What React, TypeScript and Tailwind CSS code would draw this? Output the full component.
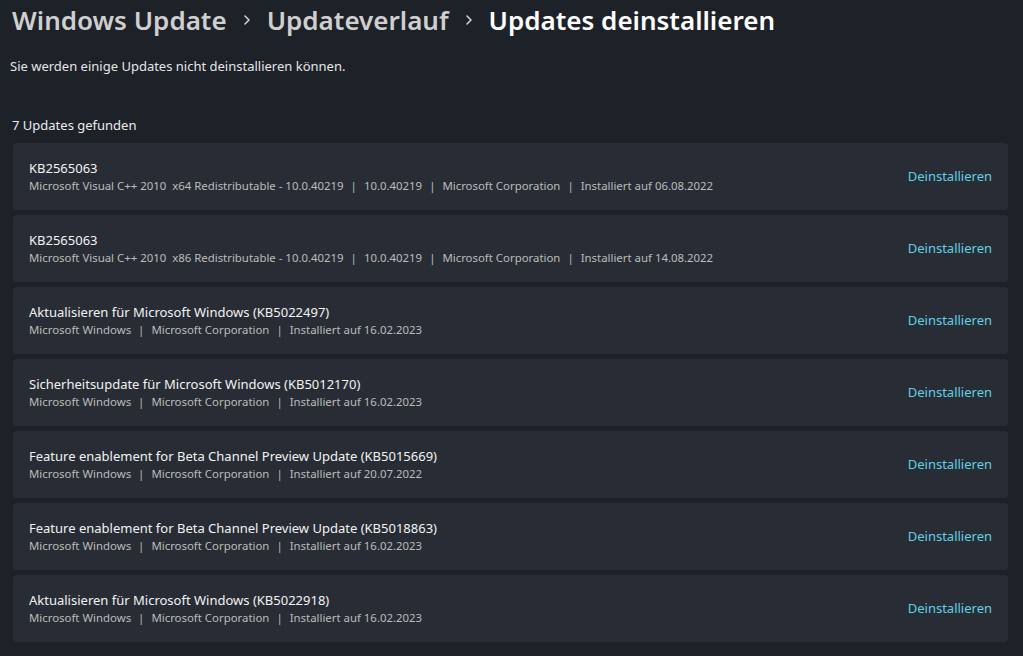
const updates = [
  {
    title: 'KB2565063',
    meta: ['Microsoft Visual C++ 2010  x64 Redistributable - 10.0.40219', '10.0.40219', 'Microsoft Corporation', 'Installiert auf 06.08.2022'],
  },
  {
    title: 'KB2565063',
    meta: ['Microsoft Visual C++ 2010  x86 Redistributable - 10.0.40219', '10.0.40219', 'Microsoft Corporation', 'Installiert auf 14.08.2022'],
  },
  {
    title: 'Aktualisieren für Microsoft Windows (KB5022497)',
    meta: ['Microsoft Windows', 'Microsoft Corporation', 'Installiert auf 16.02.2023'],
  },
  {
    title: 'Sicherheitsupdate für Microsoft Windows (KB5012170)',
    meta: ['Microsoft Windows', 'Microsoft Corporation', 'Installiert auf 16.02.2023'],
  },
  {
    title: 'Feature enablement for Beta Channel Preview Update (KB5015669)',
    meta: ['Microsoft Windows', 'Microsoft Corporation', 'Installiert auf 20.07.2022'],
  },
  {
    title: 'Feature enablement for Beta Channel Preview Update (KB5018863)',
    meta: ['Microsoft Windows', 'Microsoft Corporation', 'Installiert auf 16.02.2023'],
  },
  {
    title: 'Aktualisieren für Microsoft Windows (KB5022918)',
    meta: ['Microsoft Windows', 'Microsoft Corporation', 'Installiert auf 16.02.2023'],
  },
];

export default function App() {
  return (
    <div className="h-[656px] w-[1023px] overflow-hidden bg-[#1d2128] font-['Noto_Sans',sans-serif] text-white">
      <div className="flex items-center pl-[12px] pt-[1px] text-[26px] font-semibold leading-[38px]">
        <span className="text-[#cfcfcf]">Windows Update</span>
        <Chevron />
        <span className="text-[#cfcfcf]">Updateverlauf</span>
        <Chevron />
        <span className="text-white">Updates deinstallieren</span>
      </div>

      <p className="mt-[18px] pl-[10px] text-[13px] text-[#e6e6e6]">
        Sie werden einige Updates nicht deinstallieren können.
      </p>

      <p className="mt-[39px] pl-[12px] text-[13px] text-[#ececec]">7 Updates gefunden</p>

      <div className="mt-[8px] flex flex-col gap-[5px] pl-[13px] pr-[15px]">
        {updates.map((u, i) => (
          <div
            key={i}
            className="flex h-[67px] items-center justify-between rounded-[4px] bg-[#282d35] pl-4 pr-[16px]"
          >
            <div className="flex flex-col">
              <span className="text-[13px] leading-[18px] text-[#f2f2f2]">{u.title}</span>
              <span className="whitespace-pre text-[11.4px] leading-[18px] text-[#bcbcbc]">
                {u.meta.map((m, j) => (
                  <span key={j}>
                    {j > 0 && <span className="mx-[7px]">|</span>}
                    {m}
                  </span>
                ))}
              </span>
            </div>
            <button className="text-[13px] text-[#62d0e2]">Deinstallieren</button>
          </div>
        ))}
      </div>
    </div>
  );
}

function Chevron() {
  return (
    <svg className="mx-[15px] h-[14px] w-[10px]" viewBox="0 0 10 14" fill="none">
      <path d="M3 3l4 4-4 4" stroke="#cfcfcf" strokeWidth="1.6" strokeLinecap="round" strokeLinejoin="round" />
    </svg>
  );
}
